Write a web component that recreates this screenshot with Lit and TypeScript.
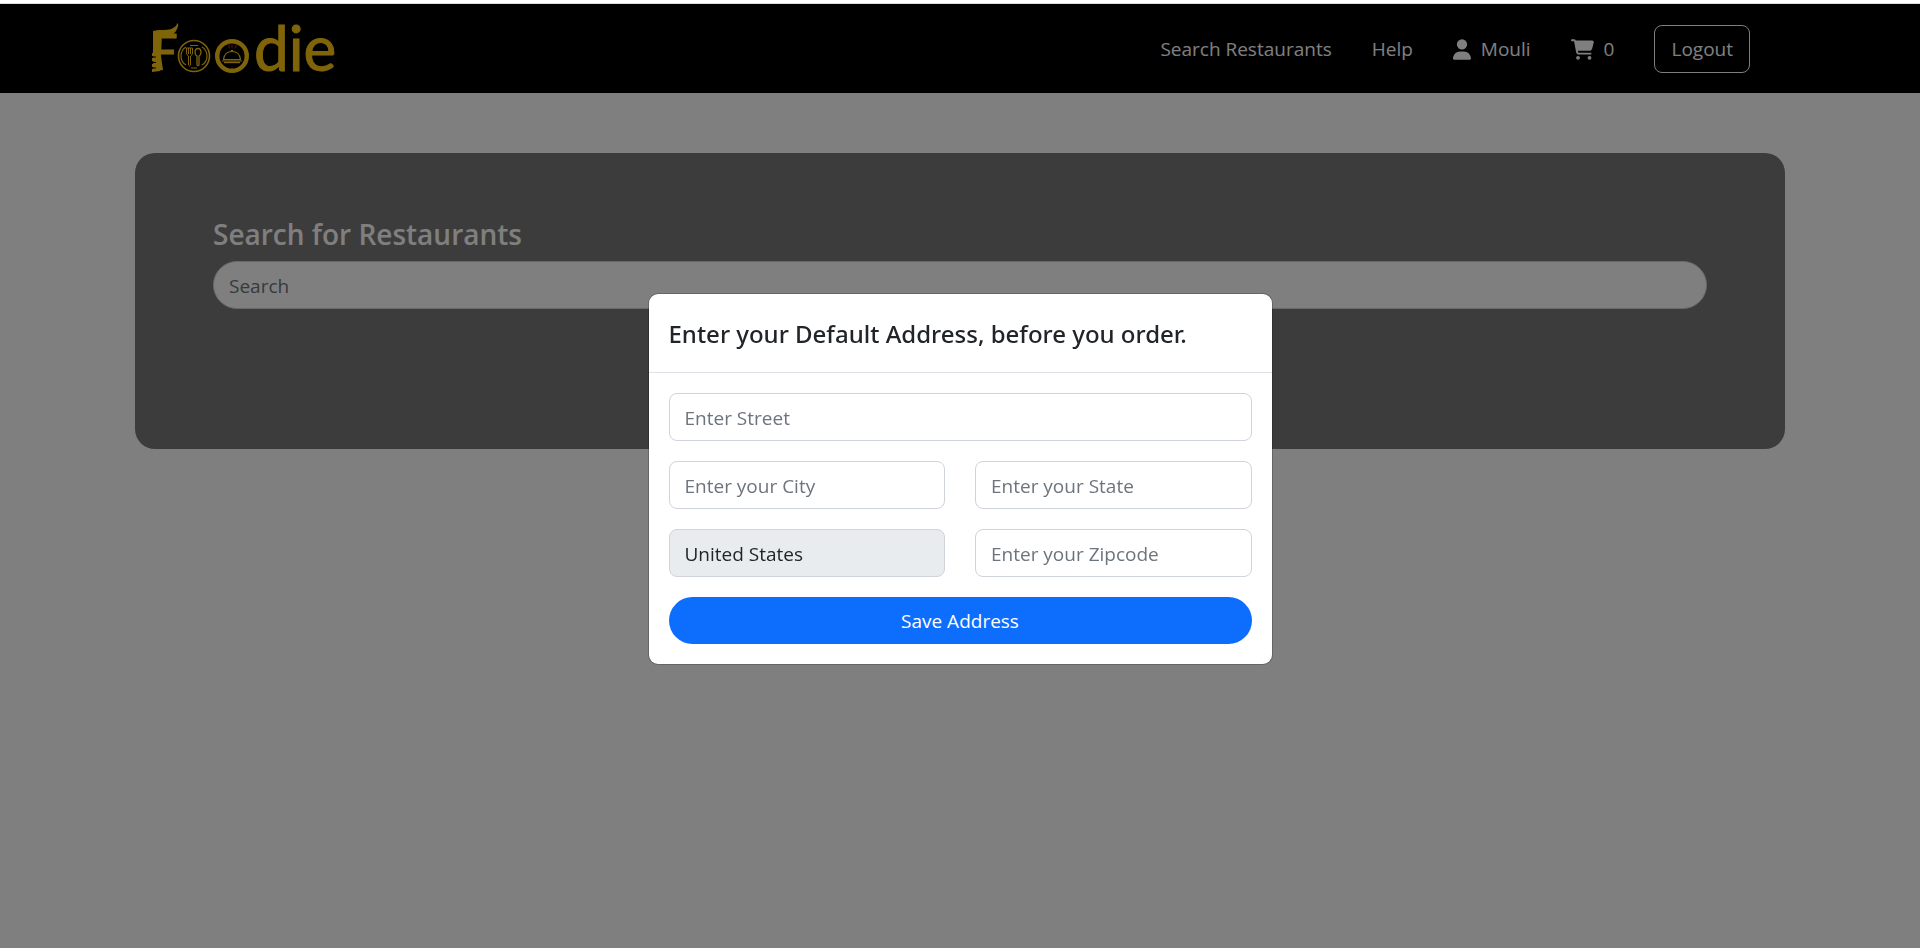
import { LitElement, html, css, svg } from "lit";
import { customElement, state } from "lit/decorators.js";

const userIcon = svg`<path fill="currentColor" d="M224 256A128 128 0 1 0 224 0a128 128 0 1 0 0 256zm-45.700 48C79.800 304 0 383.800 0 482.300C0 498.700 13.300 512 29.700 512H418.300c16.400 0 29.700-13.300 29.700-29.700C448 383.800 368.200 304 269.700 304H178.300z"/>`;
const cartIcon = svg`<path fill="currentColor" d="M24 0C10.700 0 0 10.700 0 24S10.700 48 24 48H69.500c3.800 0 7.100 2.700 7.900 6.500l51.600 271c6.500 34 36.200 58.500 70.700 58.500H488c13.300 0 24-10.700 24-24s-10.700-24-24-24H199.700c-11.500 0-21.400-8.200-23.600-19.500L170.700 288H459.200c32.600 0 61.100-21.800 69.500-53.300l41-152.300C576.600 57 557.400 32 531.100 32H120.100C111 12.800 91.600 0 69.500 0H24zM176 512a48 48 0 1 0 0-96 48 48 0 1 0 0 96zm336-48a48 48 0 1 0-96 0 48 48 0 1 0 96 0z"/>`;

@customElement("foodie-logo")
export class FoodieLogo extends LitElement {
  static styles = css`
    :host { display: block; color: #ffc914; }
    svg { display: block; }
    text { font-family: Lato, sans-serif; fill: currentColor; stroke: currentColor; }
    .initial { font-size: 51px; }
    .rest { font-size: 62px; }
  `;
  render() {
    return html`
      <svg width="194" height="80" viewBox="-4 -12 194 80" role="img" aria-label="Foodie">
        <text class="initial" x="-3" y="49" stroke-width=".800">F</text>
        <g fill="currentColor">
          <path d="M1 10C8 8 17 10 21 7Q25 5 25 2Q27 3 26 5Q25 10 21 13Q16 16 8 15L1 15Z"/>
          <path d="M1 10L10 12L9 35L11 49L4 50L4 34L1 32Z"/>
          <path d="M0 32h6v3H0zM0 37h6v3H0zM0 43h6v3H0zM0 48l8-1v3l-8 1z"/>
        </g>
        <path fill="none" stroke="#000" stroke-width="1.200" d="M0 36H4M0 41.500H4M0 47H4"/>
        <g fill="none" stroke="currentColor">
          <circle cx="42" cy="35" r="15.500" stroke-width="1.600"/>
          <path stroke-width="1.200" d="M34 26Q29 29 29 35T34 44M50 26Q55 29 55 35T50 44M38 24.500H46M39 47H45"/>
          <path stroke-width="1" d="M34.500 27v5q0 2 2 3V44q1 1.500 2 0V35Q40.500 34 40.500 32V27z"/>
          <path stroke-width="1" d="M36.500 27v6M38.500 27v6"/>
          <path stroke-width="1.300" d="M46 27.500c-2 0-3 2-3 4s1 3 2 3.500V44q1 1.500 2 0V35c1-.500 2-1.500 2-3.500s-1-4-3-4z"/>
          <circle cx="80" cy="35" r="14.800" stroke-width="4.400"/>
          <path stroke-width="1.200" d="M71.500 38.500q1-8 8.500-8t8.500 8zM79 30q1-1.500 2 0M70 40H90"/>
          <path stroke-width="1.400" d="M72 41.500H88"/>
          <path stroke="#a01818" stroke-width="1.200" d="M76 23q2 1 1 4M80 23.500v3.500M85 24q-2 1-1.500 3.500"/>
        </g>
        <text class="rest" x="102" y="50" stroke-width="1">die</text>
      </svg>
    `;
  }
}

@customElement("address-dialog")
export class AddressDialog extends LitElement {
  static styles = css`
    :host {
      position: fixed; inset: 4px 0 0; padding-top: 6px; box-sizing: border-box;
      display: grid; place-items: center;
      background: rgba(0, 0, 0, .5);
    }
    * { box-sizing: border-box; }
    .dialog {
      width: 625px; max-width: 100%;
      border: 1px solid rgba(0, 0, 0, .2); border-radius: 10px;
      background: #fff; background-clip: padding-box;
      color: #212529;
    }
    header { padding: 21px 20px 19px; border-bottom: 1px solid #dee2e6; }
    h2 { margin: 0; font-family: "Noto Sans", "Open Sans", sans-serif; font-size: 24px; line-height: 38px; font-weight: 500; }
    form { display: grid; grid-template-columns: 1fr 1fr; gap: 20px 30px; padding: 20px; }
    .wide { grid-column: 1 / -1; }
    input, button {
      width: 100%; height: 48px; min-width: 0; padding: 1px 15px 0;
      font: inherit; border: 1px solid #ced4da; border-radius: 8px;
      background: #fff; color: #212529;
    }
    input::placeholder { color: #6c757d; opacity: 1; }
    input:disabled { background: #e9ecef; }
    button { height: 47px; border: 0; border-radius: 24px; background: #0d6efd; color: #fff; cursor: pointer; }
  `;
  render() {
    return html`
      <section class="dialog" role="dialog" aria-labelledby="title">
        <header><h2 id="title">Enter your Default Address, before you order.</h2></header>
        <form @submit=${(e: Event) => e.preventDefault()}>
          <input class="wide" name="street" aria-label="Street" placeholder="Enter Street">
          <input name="city" aria-label="City" placeholder="Enter your City">
          <input name="state" aria-label="State" placeholder="Enter your State">
          <input name="country" aria-label="Country" value="United States" disabled>
          <input name="zipcode" aria-label="Zipcode" placeholder="Enter your Zipcode">
          <button class="wide">Save Address</button>
        </form>
      </section>
    `;
  }
}

@customElement("app-root")
export class AppRoot extends LitElement {
  @state() private cartCount = 0;

  static styles = css`
    :host {
      display: block; min-height: 100vh; box-sizing: border-box;
      border-top: 3px solid #fff; background: #fff; color: #fff;
      font-family: "Open Sans", "Noto Sans", sans-serif; font-size: 19px; line-height: 30px;
    }
    * { box-sizing: border-box; }
    .bar { border-top: 1px solid #ddd; background: #000; }
    .container { width: 100%; max-width: 1650px; margin: 0 auto; }
    .nav { display: flex; justify-content: space-between; align-items: center; padding: 5px 35px 4px 13px; }
    .home { display: block; }
    .links { display: flex; align-items: center; gap: 40px; }
    a { display: flex; align-items: center; gap: 10px; color: inherit; text-decoration: none; }
    .logout {
      height: 48px; padding: 0 16px; font: inherit; color: inherit; cursor: pointer;
      background: none; border: 1px solid #fff; border-radius: 8px;
    }
    .panel { margin-top: 60px; padding: 60px 78px 140px; border-radius: 20px; background: #787878; }
    label { display: block; margin-bottom: 6px; font-size: 28px; line-height: 42px; font-weight: 600; }
    .search {
      display: block; width: 100%; height: 48px; padding: 1px 15px 0; font: inherit;
      background: #fff; border: 1px solid #ced4da; border-radius: 24px;
    }
    .search::placeholder { color: #6c757d; opacity: 1; }
  `;
  render() {
    return html`
      <header class="bar">
        <nav class="container nav">
          <a class="home" href="#"><foodie-logo></foodie-logo></a>
          <div class="links">
            <a href="#search">Search Restaurants</a>
            <a href="#help">Help</a>
            <a href="#profile"><svg width="18" height="21" viewBox="0 0 448 512">${userIcon}</svg>Mouli</a>
            <a href="#cart"><svg width="23" height="21" viewBox="0 0 576 512">${cartIcon}</svg>${this.cartCount}</a>
            <button class="logout">Logout</button>
          </div>
        </nav>
      </header>
      <main class="container panel">
        <label for="search">Search for Restaurants</label>
        <input id="search" class="search" placeholder="Search">
      </main>
      <address-dialog></address-dialog>
    `;
  }
}
